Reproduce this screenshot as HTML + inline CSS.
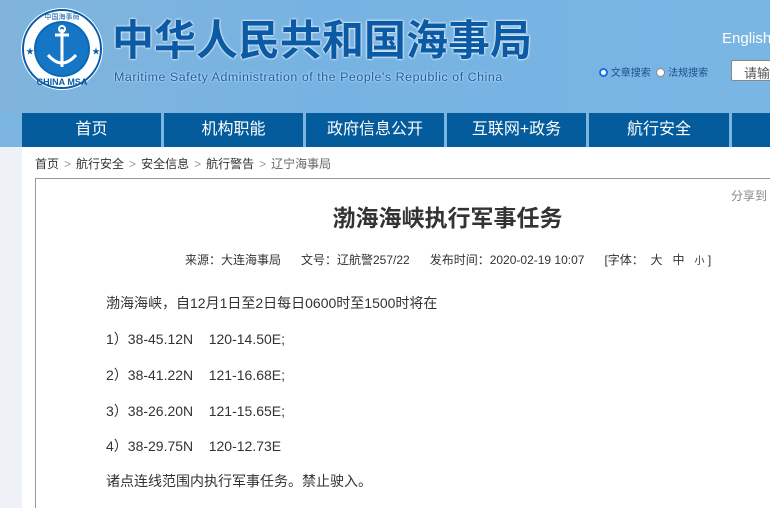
<!DOCTYPE html>
<html><head><meta charset="utf-8"><style>
*{margin:0;padding:0;box-sizing:border-box}
html,body{width:770px;height:508px;overflow:hidden}
body{position:relative;font-family:"Liberation Sans","Noto Sans CJK SC",sans-serif;background:linear-gradient(180deg,#78b2e0 0%,#80b9e4 60%,#9ccbec 100%)}
.abs{position:absolute}
.title{left:112px;top:16px;font-size:42px;line-height:50px;color:#0b5aa5;font-weight:600;white-space:nowrap;text-shadow:0 0 2px #fff,0 0 2px #fff}
.sub{left:114px;top:70px;font-size:12.4px;color:#1a5ea8;white-space:nowrap;letter-spacing:0.55px;text-shadow:0 0 2px #fff}
.nav{top:113px;height:34px;background:#045c9d;color:#fff;font-size:16px;line-height:34px;text-align:center}
.white{left:22px;top:147px;width:748px;height:361px;background:#fff}
.bc{left:35px;top:155px;font-size:12px;color:#333;white-space:nowrap}
.bc span{color:#999;margin:0 5px}
.box{left:35px;top:178px;width:740px;height:330px;border:1px solid #999;border-bottom:none}
.p{left:106px;font-size:14px;color:#333;white-space:nowrap}
</style></head><body>
<div class="abs" style="left:0;top:0;width:770px;height:113px;background:linear-gradient(90deg,#80b4dc,#77b3e2 40%,#7ab6e4)"></div>
<svg class="abs" style="left:20px;top:7px" width="86" height="86" viewBox="0 0 86 86">
<circle cx="42" cy="42" r="41" fill="#fff"/>
<circle cx="42" cy="42" r="39" fill="none" stroke="#0a5ca8" stroke-width="2"/>
<circle cx="42" cy="42" r="28" fill="#0a6ab8"/>
<circle cx="42" cy="42" r="26" fill="#1476c4"/>
<path d="M42 22v38M35 28h14M28 48q14 16 28 0" stroke="#fff" stroke-width="3" fill="none"/>
<circle cx="42" cy="22" r="3" fill="none" stroke="#fff" stroke-width="2"/>
<text x="42" y="78" font-size="9" font-weight="bold" fill="#0a5ca8" text-anchor="middle" font-family="Liberation Sans">CHINA MSA</text>
<text x="42" y="12" font-size="7" fill="#0a5ca8" text-anchor="middle" font-family="Noto Sans CJK SC">中国海事局</text>
<text x="6" y="47" font-size="8" fill="#0a5ca8">★</text><text x="72" y="47" font-size="8" fill="#0a5ca8">★</text>
</svg>
<div class="abs title">中华人民共和国海事局</div>
<div class="abs sub">Maritime Safety Administration of the People's Republic of China</div>
<div class="abs" style="left:722px;top:30px;font-size:15px;color:#fff">English</div>
<div class="abs" style="left:599px;top:64px;font-size:10px;color:#1a4f8a;white-space:nowrap"><span style="display:inline-block;width:9px;height:9px;border-radius:50%;border:2px solid #1a6fe0;background:#fff;vertical-align:-1px"></span> 文章搜索 &nbsp;<span style="display:inline-block;width:9px;height:9px;border-radius:50%;border:1px solid #888;background:#fff;vertical-align:-1px"></span> 法规搜索</div>
<div class="abs" style="left:731px;top:60px;width:50px;height:21px;background:#fff;border:1px solid #888;border-radius:2px;font-size:13px;color:#555;padding:2px 0 0 12px;white-space:nowrap">请输入</div>
<div class="abs nav" style="left:22px;width:139px">首页</div>
<div class="abs nav" style="left:164px;width:139px">机构职能</div>
<div class="abs nav" style="left:306px;width:138px">政府信息公开</div>
<div class="abs nav" style="left:447px;width:139px">互联网+政务</div>
<div class="abs nav" style="left:589px;width:140px">航行安全</div>
<div class="abs nav" style="left:732px;width:38px"></div>
<div class="abs white"></div>
<div class="abs" style="left:0;top:147px;width:22px;height:361px;background:#eef2f6"></div>
<div class="abs bc">首页<span>&gt;</span>航行安全<span>&gt;</span>安全信息<span>&gt;</span>航行警告<span>&gt;</span><i style="font-style:normal;color:#666">辽宁海事局</i></div>
<div class="abs box"></div>
<div class="abs" style="left:731px;top:187px;font-size:12px;color:#888">分享到</div>
<div class="abs" style="left:0;top:199px;width:895px;text-align:center;font-size:23px;font-weight:bold;color:#333">渤海海峡执行军事任务</div>
<div class="abs" style="left:185px;top:251px;font-size:12px;color:#333;white-space:nowrap">来源：大连海事局&nbsp;&nbsp;&nbsp;&nbsp;&nbsp;&nbsp;文号：辽航警257/22&nbsp;&nbsp;&nbsp;&nbsp;&nbsp;&nbsp;发布时间：2020-02-19 10:07&nbsp;&nbsp;&nbsp;&nbsp;&nbsp;&nbsp;[字体：&nbsp;&nbsp;大&nbsp;&nbsp;&nbsp;中&nbsp;&nbsp;&nbsp;<small style="font-size:10px">小</small> ]</div>
<div class="abs p" style="top:293px">渤海海峡，自12月1日至2日每日0600时至1500时将在</div>
<div class="abs p" style="top:329px">1）38-45.12N&nbsp;&nbsp;&nbsp;&nbsp;120-14.50E;</div>
<div class="abs p" style="top:365px">2）38-41.22N&nbsp;&nbsp;&nbsp;&nbsp;121-16.68E;</div>
<div class="abs p" style="top:401px">3）38-26.20N&nbsp;&nbsp;&nbsp;&nbsp;121-15.65E;</div>
<div class="abs p" style="top:436px">4）38-29.75N&nbsp;&nbsp;&nbsp;&nbsp;120-12.73E</div>
<div class="abs p" style="top:471px">诸点连线范围内执行军事任务。禁止驶入。</div>
</body></html>
